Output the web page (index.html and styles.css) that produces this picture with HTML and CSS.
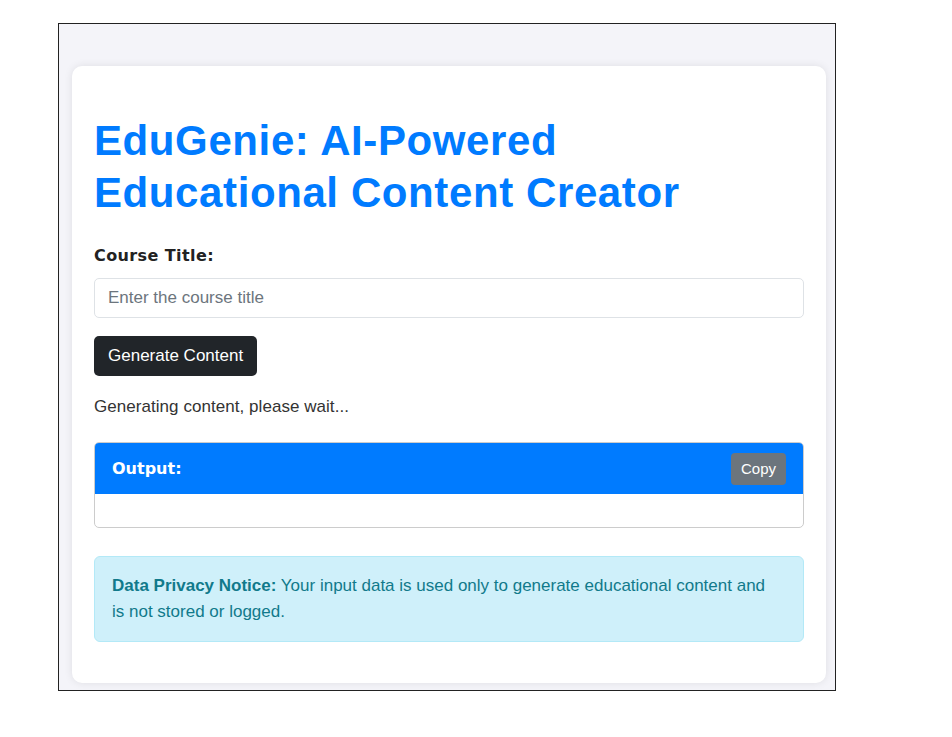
FILE: index.html
```html
<!DOCTYPE html>
<html lang="en">
<head>
<meta charset="utf-8">
<title>EduGenie</title>
<link rel="stylesheet" href="styles.css">
</head>
<body>
<div class="frame">
  <div class="card">
    <h1 class="title">EduGenie: AI-Powered Educational Content Creator</h1>
    <label class="label" for="course">Course Title:</label>
    <input class="input" id="course" type="text" placeholder="Enter the course title">
    <button class="btn-generate" type="button">Generate Content</button>
    <p class="status">Generating content, please wait...</p>
    <div class="output">
      <div class="output-head">
        <span class="output-title">Output:</span>
        <button class="btn-copy" type="button">Copy</button>
      </div>
      <div class="output-body"></div>
    </div>
    <div class="notice"><strong>Data Privacy Notice:</strong> Your input data is used only to generate educational content and is not stored or logged.</div>
  </div>
</div>
</body>
</html>
```
FILE: styles.css
```css
* { box-sizing: border-box; }
html, body { margin: 0; padding: 0; background: #fff; }
body { font-family: "Liberation Sans", Arial, sans-serif; color: #333; }

.frame {
  margin: 23px 0 0 58px;
  width: 778px;
  height: 668px;
  border: 1px solid #222;
  background: #f4f4f9;
  padding: 42px 0 0 13px;
  overflow: hidden;
}

.card {
  width: 754px;
  height: 617px;
  background: #fff;
  border-radius: 10px;
  box-shadow: 0 0 8px rgba(0,0,0,0.09);
  padding: 49px 22px 41px;
  display: flex;
  flex-direction: column;
}

.title {
  margin: 0 0 27px;
  font-size: 42px;
  letter-spacing: 0.6px;
  line-height: 52px;
  font-weight: bold;
  color: #007bff;
}

.label {
  display: block;
  font-family: "DejaVu Sans", Verdana, sans-serif;
  font-weight: bold;
  font-size: 16px;
  letter-spacing: 0.4px;
  line-height: 20px;
  color: #222;
  margin-bottom: 12px;
}

.input {
  display: block;
  width: 100%;
  height: 40px;
  border: 1px solid #dee2e6;
  border-radius: 5px;
  padding: 0 13px;
  font-family: "Liberation Sans", Arial, sans-serif;
  font-size: 17px;
  color: #333;
  margin: 0 0 18px;
}
.input::placeholder { color: #6c757d; }

.btn-generate {
  align-self: flex-start;
  height: 40px;
  padding: 0 14px;
  border: none;
  border-radius: 5px;
  background: #212529;
  color: #fff;
  font-family: "Liberation Sans", Arial, sans-serif;
  font-size: 17px;
}

.status {
  margin: 21px 0 25px;
  font-size: 17px;
  letter-spacing: 0.05px;
  line-height: 20px;
  color: #333;
}

.output {
  border: 1px solid #ccc;
  border-radius: 5px;
  overflow: hidden;
  margin-bottom: 28px;
}
.output-head {
  height: 51px;
  background: #007bff;
  display: flex;
  align-items: center;
  justify-content: space-between;
  padding: 0 17px;
}
.output-title {
  font-family: "DejaVu Sans", Verdana, sans-serif;
  font-weight: bold;
  font-size: 16px;
  color: #fff;
}
.btn-copy {
  height: 32px;
  padding: 0 10px;
  border: none;
  border-radius: 4px;
  background: #6c757d;
  color: #fff;
  font-family: "Liberation Sans", Arial, sans-serif;
  font-size: 15px;
}
.output-body { height: 33px; }

.notice {
  background: #cff0fa;
  border: 1px solid #b3e9f7;
  border-radius: 6px;
  padding: 16px 28px 16px 17px;
  font-size: 17px;
  line-height: 26px;
  color: #117a8b;
}
.notice strong { font-weight: bold; }
```
